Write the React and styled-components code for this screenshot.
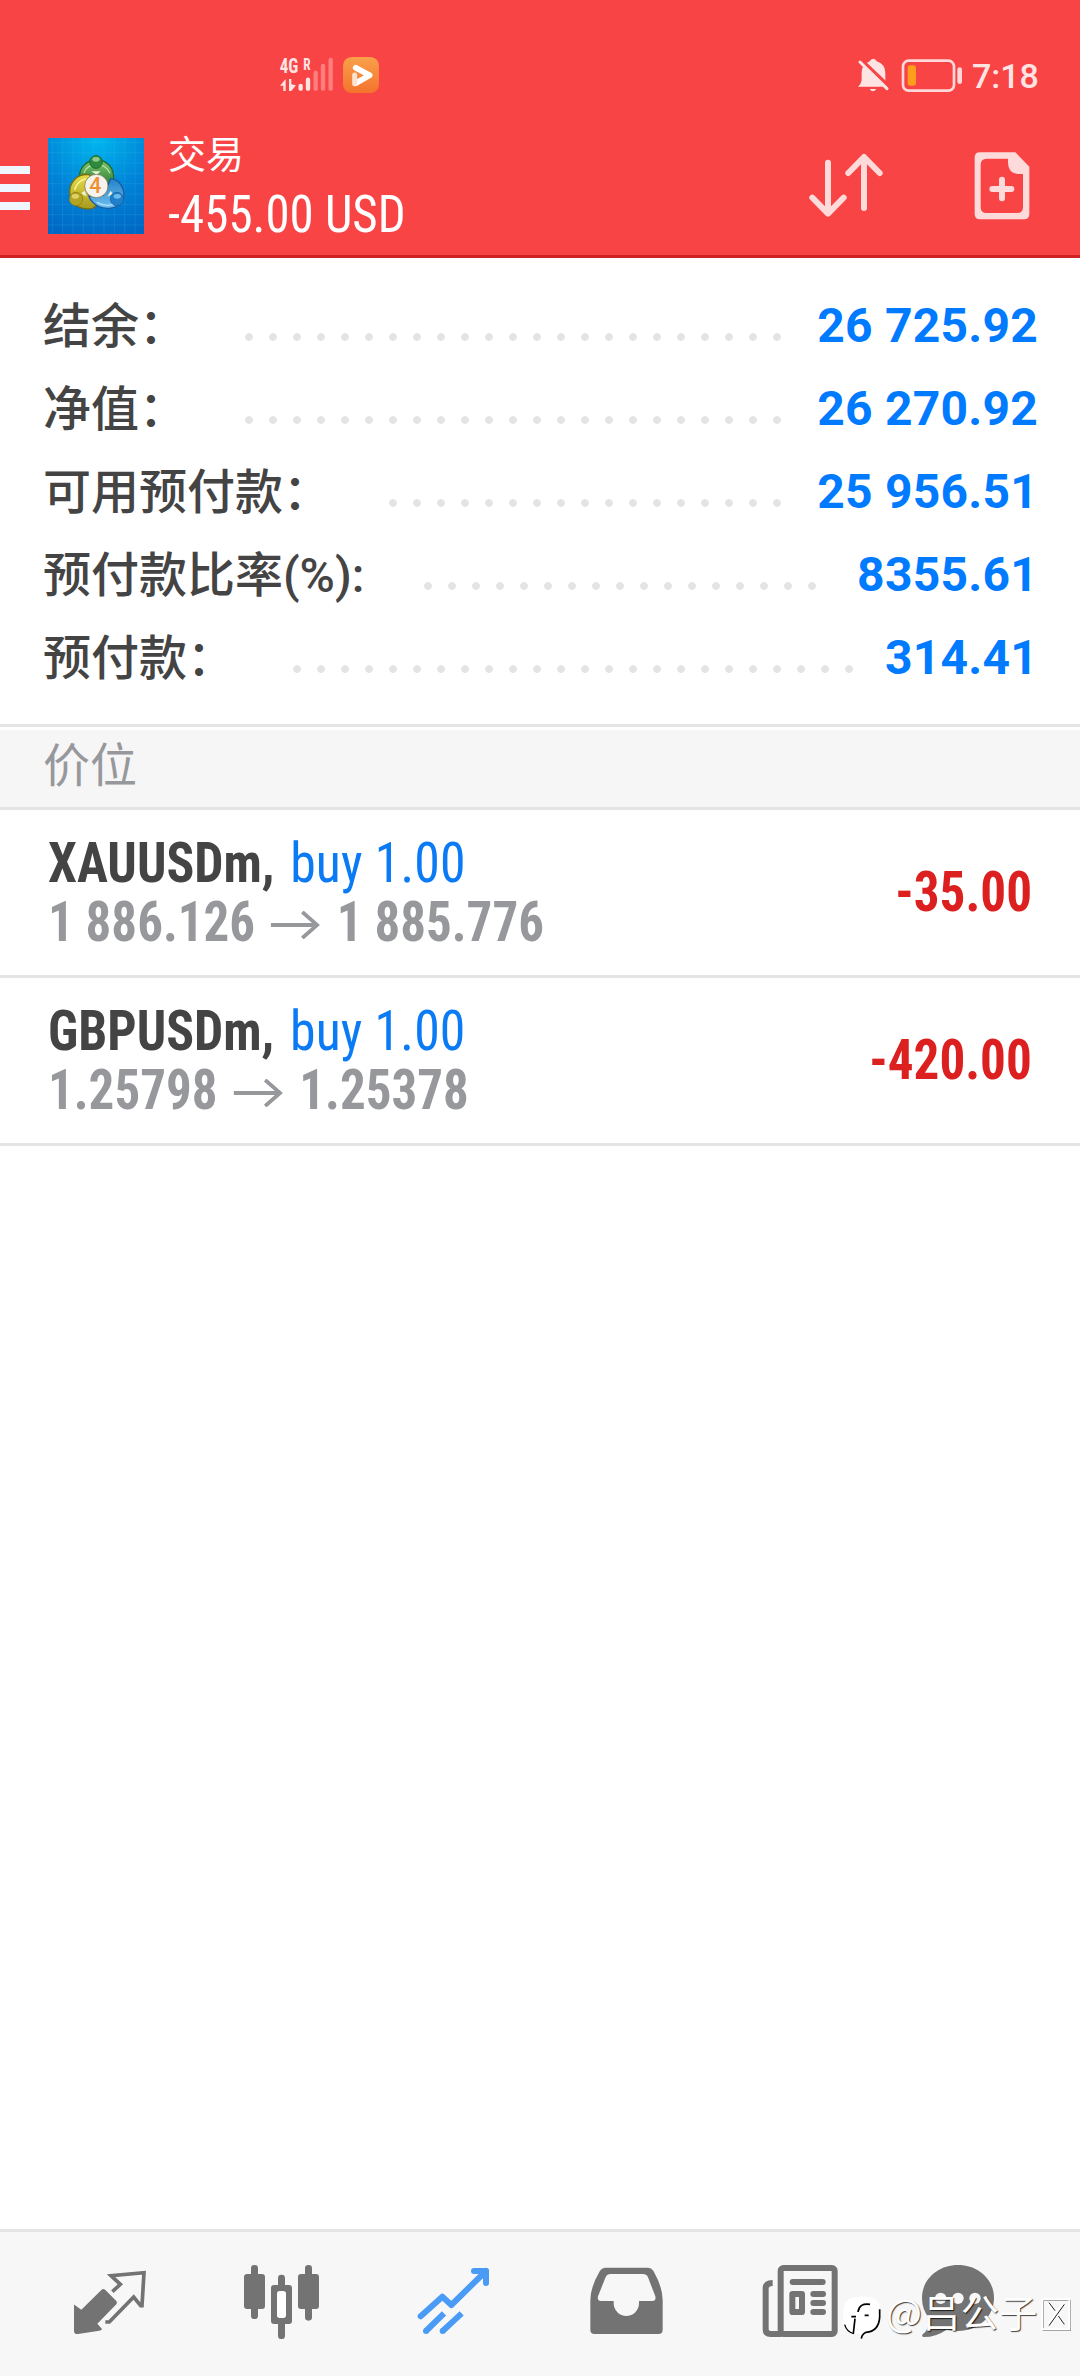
import React from "react";
import styled, { createGlobalStyle } from "styled-components";

const GlobalStyle = createGlobalStyle`
  * {
    box-sizing: border-box;
  }

  body {
    margin: 0;
    background: #fff;
    font-family: Roboto, "Noto Sans CJK SC", sans-serif;
  }

  svg {
    display: block;
    flex-shrink: 0;
  }
`;

const Container = styled.div`
  position: relative;
  display: flex;
  flex-direction: column;
  width: 1080px;
  height: 2376px;
  overflow: hidden;
  background: #fff;
`;

const Header = styled.header`
  height: 258px;
  background: #f94446;
  border-bottom: 3px solid #cf2222;
`;

const StatusBar = styled.div`
  display: flex;
  align-items: center;
  justify-content: space-between;
  height: 110px;
  padding: 40px 42px 0 278px;
`;

const StatusRight = styled.div`
  display: flex;
  align-items: center;
`;

const Clock = styled.span`
  width: 66px;
  margin-left: 8px;
  color: #ffe4e4;
  font-size: 34px;
  font-weight: 500;
  line-height: 70px;
  padding-top: 2px;
  white-space: nowrap;
`;

const Toolbar = styled.div`
  display: flex;
  align-items: center;
  height: 145px;
  padding: 7px 36px 0 0;
`;

const Menu = styled.div`
  display: flex;
  flex-direction: column;
  gap: 10px;
  width: 30px;
  margin-right: 18px;
  padding-top: 4px;
`;

const MenuBar = styled.span`
  height: 8px;
  background: #f0f6ff;
`;

const Titles = styled.div`
  flex: 1;
  margin-left: 24px;
  padding-top: 9px;
  color: #fff;
  line-height: 59px;
`;

const Title = styled.div`
  font-size: 38px;
`;

const Condensed = styled.span`
  display: inline-block;
  font-family: "Roboto Condensed", Roboto, sans-serif;
  font-size: ${(props) => props.$size || 55}px;
  font-weight: ${(props) => props.$weight || 400};
  white-space: nowrap;
  transform: scaleX(${(props) => props.$scale || 1});
  transform-origin: ${(props) => props.$origin || "left"} center;
`;

const Actions = styled.div`
  display: flex;
  gap: 72px;
`;

const Summary = styled.section`
  height: 469px;
  padding: 26px 42px 0 43px;
  border-bottom: 3px solid #e4e4e4;
`;

const SummaryRow = styled.div`
  display: flex;
  align-items: flex-start;
  height: 83px;
  font-size: 48px;
  font-weight: 500;
  line-height: 83px;
  white-space: nowrap;
`;

const Label = styled.span`
  width: ${(props) => props.$width}px;
  margin-top: 1px;
  color: #444;
`;

const Leader = styled.span`
  width: ${(props) => props.$dots * 24}px;
  height: 8px;
  margin-top: 49px;
  background: radial-gradient(circle at 4px 4px, #e4e4e4 3.5px, transparent 4.2px)
    0 0 / 24px 8px repeat-x;
`;

const Value = styled.span`
  margin-left: auto;
  color: #007aff;
  font-weight: 700;
  letter-spacing: 0.25px;
`;

const SectionTitle = styled.div`
  height: 80px;
  margin-top: 3px;
  padding-left: 43px;
  background: #f6f6f6;
  border-bottom: 3px solid #e4e4e4;
  color: #97989c;
  font-size: 47px;
  line-height: 72px;
`;

const Position = styled.div`
  display: flex;
  align-items: center;
  justify-content: space-between;
  height: 168px;
  padding: 0 48px;
  border-bottom: 3px solid #e4e4e4;
`;

const Line = styled.div`
  display: flex;
  align-items: center;
  height: 59px;
  line-height: 59px;
  color: ${(props) => props.$color};
`;

const Side = styled.span`
  margin-left: 4px;
  color: #0a7af5;
  font-weight: 400;
  letter-spacing: 0.2px;
`;

const PriceArrow = styled.svg`
  display: inline-block;
  margin: 0 18px 0 17px;
  vertical-align: 2px;
`;

const TabBar = styled.nav`
  display: flex;
  align-items: center;
  height: 147px;
  margin-top: auto;
  padding: 0 24px;
  background: #f7f7f7;
  border-top: 3px solid #e4e4e4;
`;

const Tab = styled.div`
  display: flex;
  flex: 1;
  justify-content: center;
  color: ${(props) => (props.$active ? "#4a9bf5" : "#737373")};
`;

const Watermark = styled.div`
  position: absolute;
  left: 840px;
  top: 2285px;
  display: flex;
  align-items: center;
  height: 54px;
`;

const Author = styled.span`
  width: 155px;
  padding-bottom: 3px;
  color: #fff;
  font-family: "Noto Sans CJK SC", sans-serif;
  font-size: 38px;
  letter-spacing: 0.4px;
  line-height: 54px;
  text-shadow: 1px 1px 1px rgba(0, 0, 0, 0.75);
  white-space: nowrap;
`;

const summary = [
  { label: "结余：", value: "26 725.92", width: 201.5, dots: 23 },
  { label: "净值：", value: "26 270.92", width: 201.5, dots: 23 },
  { label: "可用预付款：", value: "25 956.51", width: 345.5, dots: 17 },
  { label: "预付款比率(%):", value: "8355.61", width: 380.5, dots: 17 },
  { label: "预付款：", value: "314.41", width: 249.5, dots: 24 },
];

const positions = [
  {
    symbol: "XAUUSDm,",
    side: "buy 1.00",
    open: "1 886.126",
    current: "1 885.776",
    profit: "-35.00",
  },
  {
    symbol: "GBPUSDm,",
    side: "buy 1.00",
    open: "1.25798",
    current: "1.25378",
    profit: "-420.00",
  },
];

const SignalIcons = () => (
  <svg width="102" height="70" viewBox="54 0 306 210">
    <defs>
      <linearGradient id="play" x1="0" y1="0" x2="0" y2="1">
        <stop offset="0" stopColor="#f9a04a" />
        <stop offset="1" stopColor="#f4732c" />
      </linearGradient>
    </defs>
    <g fill="#ffe4e4" fontFamily="Roboto Condensed" fontWeight="700">
      <text x="59" y="98" fontSize="58" textLength="56" lengthAdjust="spacingAndGlyphs">
        4G
      </text>
      <text x="130" y="90" fontSize="50" textLength="22" lengthAdjust="spacingAndGlyphs">
        R
      </text>
    </g>
    <path d="M60 137 77 117V153H70V137ZM87 117h7v16l14 3-14 17h-7Z" fill="#ffe4e4" />
    <g strokeWidth="13" strokeLinecap="round">
      <path d="M122 138v8M144 119v27" stroke="#ffe4e4" />
      <path d="M167 98v48M189 78v68M212 60v86" stroke="#fd7e7e" />
    </g>
    <rect x="249" y="51" width="108" height="108" rx="26" fill="url(#play)" />
    <path d="M287 83 329 106 287 130" fill="none" stroke="#fff" strokeWidth="17" strokeLinecap="round" strokeLinejoin="round" />
    <path d="M284 105v26" stroke="#fde3cf" strokeWidth="15" strokeLinecap="round" />
  </svg>
);

const BatteryIcons = () => (
  <svg width="108" height="70" viewBox="48 0 324 210">
    <path
      d="M100 56q7 0 10 8 26 8 26 36v24q0 8 8 16H54q11-10 11-24V98q0-24 24-34 4-8 11-8ZM89 147h20q-10 14-20 0Z"
      fill="#ffe4e4"
    />
    <path d="M62 58 150 142" stroke="#f94446" strokeWidth="11" />
    <path d="M60 66 141 146" stroke="#ffe4e4" strokeWidth="9" strokeLinecap="round" />
    <rect x="189" y="62" width="153" height="90" rx="17" fill="none" stroke="#ffd9d9" strokeWidth="8" />
    <rect x="203" y="76" width="25" height="61" rx="7" fill="#ff9d1c" />
    <rect x="352" y="82" width="14" height="50" rx="7" fill="#ffd9d9" />
  </svg>
);

const Logo = () => (
  <svg width="96" height="96" viewBox="12 12 288 288">
    <defs>
      <radialGradient id="sky" cx="0.5" cy="0" r="1.05">
        <stop offset="0" stopColor="#00b8ee" />
        <stop offset="0.55" stopColor="#0084d8" />
        <stop offset="1" stopColor="#0068c4" />
      </radialGradient>
      <linearGradient id="green" x1="0" y1="0" x2="0" y2="1">
        <stop offset="0" stopColor="#7fc46e" />
        <stop offset="1" stopColor="#237a2e" />
      </linearGradient>
      <linearGradient id="yellow" x1="0" y1="0" x2="0" y2="1">
        <stop offset="0" stopColor="#e8dd48" />
        <stop offset="1" stopColor="#a89a1e" />
      </linearGradient>
      <linearGradient id="blue" x1="0" y1="0" x2="0" y2="1">
        <stop offset="0" stopColor="#2581c8" />
        <stop offset="1" stopColor="#6fc0f0" />
      </linearGradient>
    </defs>
    <rect x="12" y="12" width="288" height="288" fill="url(#sky)" />
    <path
      d="M25 12v288M56 12v288M87 12v288M118 12v288M149 12v288M180 12v288M211 12v288M242 12v288M273 12v288M12 25h288M12 56h288M12 87h288M12 118h288M12 149h288M12 180h288M12 211h288M12 242h288M12 273h288"
      stroke="#4fc0f5"
      strokeOpacity="0.25"
      strokeWidth="2"
    />
    <g strokeWidth="4">
      <path d="M158 78C126 78 104 102 106 136L120 160H194L209 136C211 102 190 78 158 78Z" fill="url(#green)" stroke="#1e6a2c" />
      <path d="M136 122C96 118 72 150 78 184C84 214 112 230 146 223L172 204L150 160Z" fill="url(#yellow)" stroke="#7a6e12" />
      <path d="M200 134C228 136 244 166 239 194C232 220 196 230 164 218Q142 206 134 186L178 184Z" fill="url(#blue)" stroke="#1b5a9c" />
    </g>
    <path d="M120 116q10-24 38-24t40 26" fill="none" stroke="#b8e5a4" strokeWidth="4" />
    <path d="M92 168q6-26 34-34" fill="none" stroke="#fbf7a0" strokeWidth="4" />
    <path d="M158 205q34 18 64 0" fill="none" stroke="#b4e2fb" strokeWidth="4" />
    <path d="M112 178 122 170 128 188ZM190 188 200 170 206 180ZM142 112h28l-12 10Z" fill="#eef5dc" />
    <circle cx="156" cy="84" r="19" fill="#2f8a3e" stroke="#1e6a2c" strokeWidth="3" />
    <ellipse cx="156" cy="76" rx="11" ry="7" fill="#8fc98c" />
    <circle cx="96" cy="195" r="20" fill="#b3a424" stroke="#85780f" strokeWidth="2" />
    <ellipse cx="94" cy="187" rx="11" ry="7" fill="#ddd266" />
    <circle cx="219" cy="195" r="20" fill="#1f7fcb" stroke="#175b9c" strokeWidth="2" />
    <ellipse cx="220" cy="187" rx="11" ry="7" fill="#6dbbe8" />
    <circle cx="157" cy="156" r="35" fill="#f4f3ee" stroke="#6e6338" strokeWidth="2" />
    <text x="154" y="178" textAnchor="middle" fontFamily="Roboto" fontSize="64" fontWeight="500" fill="#f09032">
      4
    </text>
  </svg>
);

const SortIcon = () => (
  <svg width="84" height="84" viewBox="72 72 252 252">
    <path
      d="M144 128V280M97 233 144 281 191 233M252 264V112M205 159 252 111 299 159"
      fill="none"
      stroke="#ffdada"
      strokeWidth="18"
      strokeLinecap="round"
      strokeLinejoin="round"
    />
  </svg>
);

const NewOrderIcon = () => (
  <svg width="84" height="84" viewBox="540 72 252 252">
    <path
      d="M600 97H706L748 140V282Q748 298 732 298H600Q584 298 584 282V113Q584 97 600 97ZM620 116Q602 116 602 134V261Q602 279 620 279H712Q729 279 729 261V162H716Q684 160 684 128V116Z"
      fill="#ffdada"
      fillRule="evenodd"
    />
    <path d="M666 179v56M637 207h57" stroke="#ffdada" strokeWidth="18" strokeLinecap="round" />
  </svg>
);

const icons = [
  {
    name: "quotes",
    viewBox: "30 87 360 360",
    shape: (
      <>
        <path
          d="M103 269 124 284 184 225Q190 219 196 225L229 258Q233 263 229 268L172 326 186 342Q186 346 178 347L114 357Q102 358 102 347V270Z"
          fill="currentColor"
        />
        <path
          d="M217 230 241 208 213 182 312 173 306 272H302L281 246 208 321H196"
          fill="none"
          stroke="currentColor"
          strokeWidth="11"
        />
      </>
    ),
  },
  {
    name: "chart",
    viewBox: "546 87 360 360",
    shape: (
      <g fill="currentColor">
        <rect x="633" y="150" width="21" height="162" rx="10" />
        <rect x="612" y="177" width="63" height="105" rx="9" />
        <rect x="795" y="150" width="21" height="167" rx="10" />
        <rect x="774" y="177" width="63" height="105" rx="9" />
        <rect x="714" y="179" width="21" height="193" rx="10" />
        <rect x="693" y="210" width="63" height="117" rx="9" />
        <rect x="711" y="228" width="27" height="81" rx="8" fill="#fff" />
      </g>
    ),
  },
  {
    name: "trade",
    active: true,
    viewBox: "1062 87 360 360",
    shape: (
      <g fill="none" stroke="currentColor" strokeWidth="18">
        <path d="M1142 304 1207 245 1234 270 1338 168" strokeLinecap="round" strokeLinejoin="round" />
        <path d="M1302 168H1338V204" strokeLinecap="round" strokeLinejoin="round" />
        <path d="M1212 295 1158 348M1265 295 1208 348" />
        <circle cx="1158" cy="348" r="9" fill="currentColor" stroke="none" />
        <circle cx="1208" cy="348" r="9" fill="currentColor" stroke="none" />
      </g>
    ),
  },
  {
    name: "history",
    viewBox: "18 87 360 360",
    shape: (
      <path
        d="M136 158H264Q274 158 280 167Q308 216 308 256V344Q308 357 295 357H104Q91 357 91 344V256Q91 216 120 167Q126 158 136 158ZM152 177Q141 177 137 186L114 244Q111 258 123 258H161V264A38 39 0 0 0 237 264V258H277Q289 258 286 244L264 187Q260 177 248 177Z"
        fill="currentColor"
        fillRule="evenodd"
      />
    ),
  },
  {
    name: "news",
    viewBox: "534 87 360 360",
    shape: (
      <g fill="none" stroke="currentColor" strokeWidth="18">
        <rect x="662" y="159" width="162" height="198" rx="8" />
        <path d="M638 204Q617 204 617 221V343Q617 357 632 357H665" />
        <path d="M698 201H788M760 237H789M760 264H789M760 291H789" strokeLinecap="round" />
        <rect x="697" y="237" width="29" height="54" rx="1" />
      </g>
    ),
  },
  {
    name: "chat",
    viewBox: "1050 87 360 360",
    shape: (
      <>
        <path
          d="M1194 150C1255 150 1302 193 1302 249S1255 348 1194 348Q1176 348 1160 344Q1128 366 1092 366Q1084 366 1088 358Q1108 344 1108 309Q1086 286 1086 249C1086 193 1134 150 1194 150Z"
          fill="currentColor"
        />
        <g fill="#f7f7f7">
          <circle cx="1142" cy="250" r="17" />
          <circle cx="1194" cy="250" r="17" />
          <circle cx="1245" cy="250" r="17" />
        </g>
      </>
    ),
  },
];

const WatermarkBadge = () => (
  <svg width="46" height="54" viewBox="30 75 138 162">
    <path d="M70 222Q44 220 40 190V150Q44 110 84 110H112Q150 112 150 150V176Q148 216 116 220L92 238 92 222Z" fill="#fff" />
    <path
      d="M120 133Q88 128 84 156M64 170H78M104 166H116M75 176 70 220M94 236Q96 222 108 217Q146 214 149 172V148"
      fill="none"
      stroke="#000"
      strokeWidth="5"
    />
    <path d="M44 194Q50 216 72 221" fill="none" stroke="#000" strokeWidth="4" />
  </svg>
);

const MissingGlyph = styled.svg`
  margin-top: 5px;
`;

const App = () => {
  return (
    <Container>
      <GlobalStyle />
      <Header>
        <StatusBar>
          <SignalIcons />
          <StatusRight>
            <BatteryIcons />
            <Clock>7:18</Clock>
          </StatusRight>
        </StatusBar>
        <Toolbar>
          <Menu>
            <MenuBar />
            <MenuBar />
            <MenuBar />
          </Menu>
          <Logo />
          <Titles>
            <Title>交易</Title>
            <Condensed $size={52} $weight={450} $scale={0.94}>
              -455.00 USD
            </Condensed>
          </Titles>
          <Actions>
            <SortIcon />
            <NewOrderIcon />
          </Actions>
        </Toolbar>
      </Header>
      <Summary>
        {summary.map((item) => (
          <SummaryRow key={item.label}>
            <Label $width={item.width}>{item.label}</Label>
            <Leader $dots={item.dots} />
            <Value>{item.value}</Value>
          </SummaryRow>
        ))}
      </Summary>
      <SectionTitle>价位</SectionTitle>
      {positions.map((item) => (
        <Position key={item.symbol}>
          <div>
            <Line $color="#444">
              <Condensed $weight={700} $scale={0.94}>
                {item.symbol} <Side>{item.side}</Side>
              </Condensed>
            </Line>
            <Line $color="#97989c">
              <Condensed $weight={700} $scale={0.928}>
                {item.open}
                <PriceArrow width="53" height="28" viewBox="0 0 53 28">
                  <path d="M0 14H50M34 1 50 14 34 27" fill="none" stroke="#97989c" strokeWidth="4" />
                </PriceArrow>
                {item.current}
              </Condensed>
            </Line>
          </div>
          <Line $color="#dc2020">
            <Condensed $weight={700} $scale={0.93} $origin="right">
              {item.profit}
            </Condensed>
          </Line>
        </Position>
      ))}
      <TabBar>
        {icons.map((icon) => (
          <Tab key={icon.name} $active={icon.active}>
            <svg width="120" height="120" viewBox={icon.viewBox}>
              {icon.shape}
            </svg>
          </Tab>
        ))}
      </TabBar>
      <Watermark>
        <WatermarkBadge />
        <Author>@吕公子</Author>
        <MissingGlyph width="32" height="34" viewBox="632 114 96 102">
          <path d="M639 121H720V211H639Z" fill="none" stroke="#888" strokeWidth="4" />
          <path d="M636 118H717V208H636ZM652 130 699 193M699 130 652 193" fill="none" stroke="#fff" strokeWidth="6" />
          <path d="M702 133 656 197M656 128 674 152M684 168 702 193" stroke="#222" strokeWidth="3" />
        </MissingGlyph>
      </Watermark>
    </Container>
  );
};

export default App;
